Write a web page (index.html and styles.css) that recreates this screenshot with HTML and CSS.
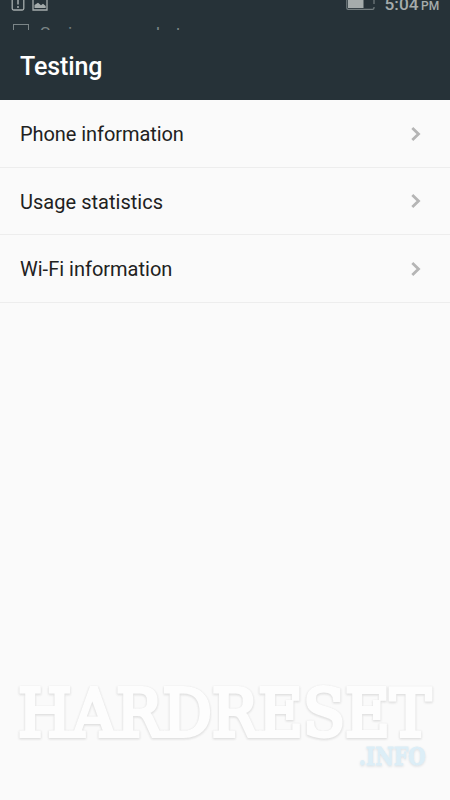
FILE: index.html
```html
<!DOCTYPE html>
<html lang="en">
<head>
<meta charset="utf-8">
<meta name="viewport" content="width=device-width, initial-scale=1">
<title>Testing</title>
<link rel="stylesheet" href="styles.css">
</head>
<body>
<div class="screen">
  <header class="header">
    <div class="status">
      <svg class="status-icons" width="60" height="12" viewBox="0 0 60 12" fill="none">
        <path d="M12.2 0V8.5Q12.2 10 13.7 10H22.3Q23.8 10 23.8 8.5V0" stroke="#a5acac" stroke-width="1.3"/>
        <path d="M18 0V4.5M18 6V8" stroke="#a5acac" stroke-width="1.5"/>
        <path d="M33 0V10H47V0" stroke="#a5acac" stroke-width="1.3"/>
        <path d="M34.5 8V5L38 2.8L41 5.3L43 3.8L45.7 6V8Z" fill="#a5acac"/>
      </svg>
      <svg class="battery" width="30" height="12" viewBox="0 0 30 12" fill="none">
        <path d="M.8 0V8Q.8 9.3 2.1 9.3H26.5Q28 9.3 28 8V7M28 4V0" stroke="#747e80" stroke-width="1.2"/>
        <path d="M2 0H17.5V8H2Z" fill="#a5acac"/>
      </svg>
      <div class="clock">5:04<span class="meridiem">PM</span></div>
    </div>
    <div class="notice"><span class="notice-box"></span><span class="notice-text">Saving screenshot...</span></div>
    <h1 class="title">Testing</h1>
  </header>
  <main class="list">
    <div class="row"><span class="label phone">Phone information</span><svg class="chevron" width="12" height="16" viewBox="0 0 12 16"><path d="M2.3 2L8.5 8L2.3 14"/></svg></div>
    <div class="row"><span class="label usage">Usage statistics</span><svg class="chevron" width="12" height="16" viewBox="0 0 12 16"><path d="M2.3 2L8.5 8L2.3 14"/></svg></div>
    <div class="row"><span class="label wifi">Wi-Fi information</span><svg class="chevron" width="12" height="16" viewBox="0 0 12 16"><path d="M2.3 2L8.5 8L2.3 14"/></svg></div>
  </main>
  <svg class="watermark" width="450" height="120" viewBox="0 0 450 120">
    <text class="brand" x="18" y="55.5" textLength="413" lengthAdjust="spacingAndGlyphs">HARDRESET</text>
    <text class="tld" x="359" y="85" textLength="67" lengthAdjust="spacingAndGlyphs">.INFO</text>
  </svg>
</div>
</body>
</html>
```
FILE: styles.css
```css
* { box-sizing: border-box; }
body { margin: 0; font-family: Roboto, sans-serif; background: #fafafa; }
.screen { width: 450px; height: 800px; overflow: hidden; display: flex; flex-direction: column; }
.header { height: 100px; background: #263238; overflow: hidden; flex: none; }
.status { height: 22px; display: flex; align-items: flex-start; overflow: hidden; }
.status-icons { flex: none; }
.battery { margin-left: 286px; flex: none; }
.clock { margin: -6px 0 0 8.5px; color: #a5acac; font-size: 17.3px; font-weight: 500; line-height: 20px; white-space: nowrap; }
.meridiem { font-size: 12px; margin-left: 2.5px; }
.notice { height: 8px; overflow: hidden; display: flex; padding: 2px 0 0 13px; color: #7b8587; }
.notice-box { width: 16px; height: 15px; border: 1px solid #7b8587; flex: none; }
.notice-text { margin: -1px 0 0 11px; font-size: 17.3px; line-height: 20px; white-space: nowrap; }
.title { margin: 0; padding: 0 20px; height: 70px; font-size: 25px; font-weight: 500; line-height: 74px; letter-spacing: -.1px; color: #fff; }
.list { flex: none; }
.row { height: 67.5px; display: flex; align-items: center; justify-content: space-between; padding: 1px 28px 0 20px; border-bottom: 1px solid #ededed; }
.label { font-size: 20px; line-height: 28px; color: #212121; }
.phone { letter-spacing: -.07px; }
.usage { letter-spacing: .03px; padding-top: 1px; }
.chevron { fill: none; stroke: #b5b5b5; stroke-width: 2.8; }
.watermark { margin-top: auto; flex: none; font-family: "DejaVu Serif", serif; }
.brand { font-size: 65px; fill: #fdfdfd; stroke: #fdfdfd; stroke-width: 4; filter: drop-shadow(0 1.5px 1px #dedede) drop-shadow(0 0 .7px #e6e6e6); }
.tld { font-size: 24px; font-weight: 700; fill: #dceef7; stroke: #dceef7; stroke-width: .8; filter: drop-shadow(0 1px .8px #dcdfe2); }
```
